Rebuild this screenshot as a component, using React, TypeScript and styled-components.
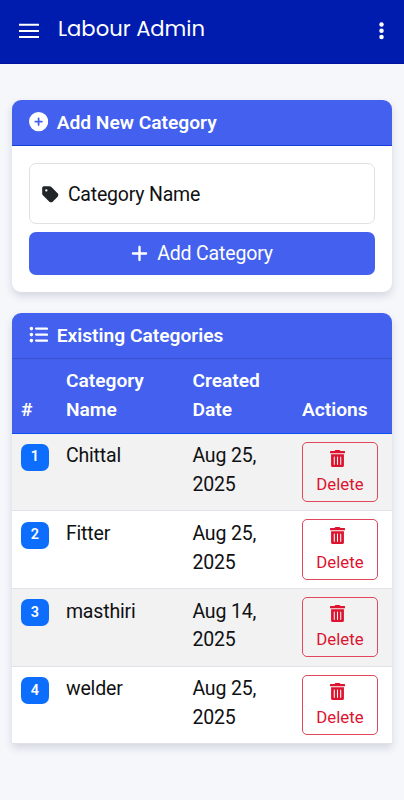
import React from 'react';
import styled, { createGlobalStyle } from 'styled-components';
import { FaCirclePlus, FaListUl, FaPlus, FaTag } from 'react-icons/fa6';

const GlobalStyle = createGlobalStyle`
  *, *::before, *::after { box-sizing: border-box; }
  body {
    margin: 0;
    background: #f5f7fb;
    font-family: Roboto, "Noto Sans", sans-serif;
    color: #101113;
  }
  button { font-family: inherit; cursor: pointer; }
`;

const Page = styled.div`
  min-height: 800px;
  overflow: hidden;
`;

const Navbar = styled.header`
  display: flex;
  align-items: center;
  height: 64px;
  padding: 0 20.5px 0 19px;
  background: #001caf;
  border-bottom: 1px solid #00109c;
  color: #fff;
`;

const IconButton = styled.button`
  display: flex;
  margin-top: -1px;
  padding: 0;
  border: 0;
  background: none;
  color: #fff;
`;

const Brand = styled.h1`
  flex: 1;
  margin: -6px 0 0 19px;
  font: 400 21.1px/32px Poppins, Lato, sans-serif;
`;

const Content = styled.main`
  display: flex;
  flex-direction: column;
  gap: 21px;
  padding: 36px 12.4px 0 12.4px;
`;

const Card = styled.section<{ $square?: boolean }>`
  background: #fff;
  border-radius: ${(p) => (p.$square ? '9px 9px 0 0' : '9px')};
  box-shadow: 0 4px 9px rgba(20, 35, 60, 0.15);
`;

const CardHeader = styled.h2<{ $line: string }>`
  display: flex;
  align-items: center;
  gap: 8.5px;
  height: 46px;
  margin: 0;
  padding: 0 17px 1px 16.6px;
  background: #4361ee;
  border-bottom: 1px solid ${(p) => p.$line};
  border-radius: 9px 9px 0 0;
  color: #fff;
  font-size: 19.2px;
  font-weight: 600;
  line-height: 29px;
`;

const Form = styled.form`
  display: flex;
  flex-direction: column;
  gap: 8px;
  padding: 17px 16.6px 17px 16.6px;
`;

const Field = styled.label`
  display: flex;
  align-items: center;
  gap: 8px;
  height: 61px;
  padding: 1px 11px 0;
  border: 1px solid #dfe1e4;
  border-radius: 7px;
  font-size: 19.5px;
  letter-spacing: -0.2px;
`;

const SubmitButton = styled.button`
  display: flex;
  align-items: center;
  justify-content: center;
  gap: 8px;
  height: 43px;
  padding: 0 1px 0 0;
  border: 0;
  border-radius: 7px;
  background: #4361ee;
  color: #fff;
  font-size: 19.5px;
  letter-spacing: -0.16px;
`;

const Table = styled.table`
  width: 100%;
  table-layout: fixed;
  border-collapse: separate;
  border-spacing: 0;
  font-size: 19.5px;
  letter-spacing: -0.16px;
  line-height: 28.7px;
`;

const Col = styled.col<{ $w?: number }>`
  width: ${(p) => (p.$w ? `${p.$w}px` : 'auto')};
`;

const HeadCell = styled.th`
  height: 74.5px;
  padding: 8px 8.5px;
  background: #4361ee;
  border-bottom: 1px solid #0d4ff0;
  color: #fff;
  font-size: 19.2px;
  font-weight: 600;
  letter-spacing: 0;
  text-align: left;
  vertical-align: bottom;
`;

const Row = styled.tr`
  background: #fff;
  &:nth-child(odd) { background: #f2f2f2; }
`;

const Cell = styled.td`
  height: 77.7px;
  padding: 8.8px 8.5px 7.4px;
  border-bottom: 1px solid #dfe2e6;
  vertical-align: top;
`;

const Badge = styled.span`
  display: flex;
  align-items: center;
  justify-content: center;
  width: 28px;
  height: 27px;
  margin-top: 1.7px;
  border-radius: 7px;
  background: #0d6efd;
  color: #fff;
  font-size: 14.4px;
  font-weight: 600;
  letter-spacing: 0;
  line-height: 20px;
`;

const DeleteButton = styled.button`
  display: flex;
  flex-direction: column;
  align-items: center;
  width: 76px;
  height: 60.4px;
  margin-top: -0.7px;
  padding: 7px 0 0;
  border: 1px solid #e0475a;
  border-radius: 5px;
  background: transparent;
  color: #dc1430;
  font-size: 16.8px;
  line-height: 25px;

  svg { margin-right: 4px; }
`;

const DeleteText = styled.span`
  margin-top: 5.3px;
`;

const MenuIcon = () => (
  <svg width="20" height="16" viewBox="0 0 20 16" fill="currentColor">
    <path d="M0 .7h20v2H0zM0 7h20v2H0zM0 13.1h20v2H0z" />
  </svg>
);

const MoreIcon = () => (
  <svg width="5" height="18" viewBox="0 0 5 18" fill="currentColor">
    <circle cx="2.5" cy="2.4" r="2.25" />
    <circle cx="2.5" cy="8.7" r="2.25" />
    <circle cx="2.5" cy="15" r="2.25" />
  </svg>
);

const TrashIcon = () => (
  <svg width="15" height="17" viewBox="0 0 448 512" fill="currentColor" preserveAspectRatio="none">
    <path
      fillRule="evenodd"
      d="M32 464a48 48 0 0 0 48 48h288a48 48 0 0 0 48-48V128H32zm272-256a16 16 0 0 1 32 0v224a16 16 0 0 1-32 0zm-96 0a16 16 0 0 1 32 0v224a16 16 0 0 1-32 0zm-96 0a16 16 0 0 1 32 0v224a16 16 0 0 1-32 0zM432 32H312l-9.4-18.7A24 24 0 0 0 281.1 0H166.8a23.72 23.72 0 0 0-21.4 13.3L136 32H16A16 16 0 0 0 0 48v32a16 16 0 0 0 16 16h416a16 16 0 0 0 16-16V48a16 16 0 0 0-16-16z"
    />
  </svg>
);

const categories = [
  { name: 'Chittal', date: 'Aug 25, 2025' },
  { name: 'Fitter', date: 'Aug 25, 2025' },
  { name: 'masthiri', date: 'Aug 14, 2025' },
  { name: 'welder', date: 'Aug 25, 2025' },
];

export default function App() {
  return (
    <Page>
      <GlobalStyle />
      <Navbar>
        <IconButton aria-label="Menu"><MenuIcon /></IconButton>
        <Brand>Labour Admin</Brand>
        <IconButton aria-label="More options"><MoreIcon /></IconButton>
      </Navbar>
      <Content>
        <Card>
          <CardHeader $line="#1740d8"><FaCirclePlus size={19.2} />Add New Category</CardHeader>
          <Form onSubmit={(e) => e.preventDefault()}>
            <Field><FaTag size={18.9} color="#212529" />Category Name</Field>
            <SubmitButton><FaPlus size={19} />Add Category</SubmitButton>
          </Form>
        </Card>
        <Card $square>
          <CardHeader $line="#3853cb"><FaListUl size={19.2} />Existing Categories</CardHeader>
          <Table>
            <colgroup>
              <Col $w={45} />
              <Col $w={126.5} />
              <Col $w={109.5} />
              <Col />
            </colgroup>
            <thead>
              <tr>
                <HeadCell>#</HeadCell>
                <HeadCell>Category Name</HeadCell>
                <HeadCell>Created Date</HeadCell>
                <HeadCell>Actions</HeadCell>
              </tr>
            </thead>
            <tbody>
              {categories.map((c, i) => (
                <Row key={c.name}>
                  <Cell><Badge>{i + 1}</Badge></Cell>
                  <Cell>{c.name}</Cell>
                  <Cell>{c.date}</Cell>
                  <Cell>
                    <DeleteButton><TrashIcon /><DeleteText>Delete</DeleteText></DeleteButton>
                  </Cell>
                </Row>
              ))}
            </tbody>
          </Table>
        </Card>
      </Content>
    </Page>
  );
}
